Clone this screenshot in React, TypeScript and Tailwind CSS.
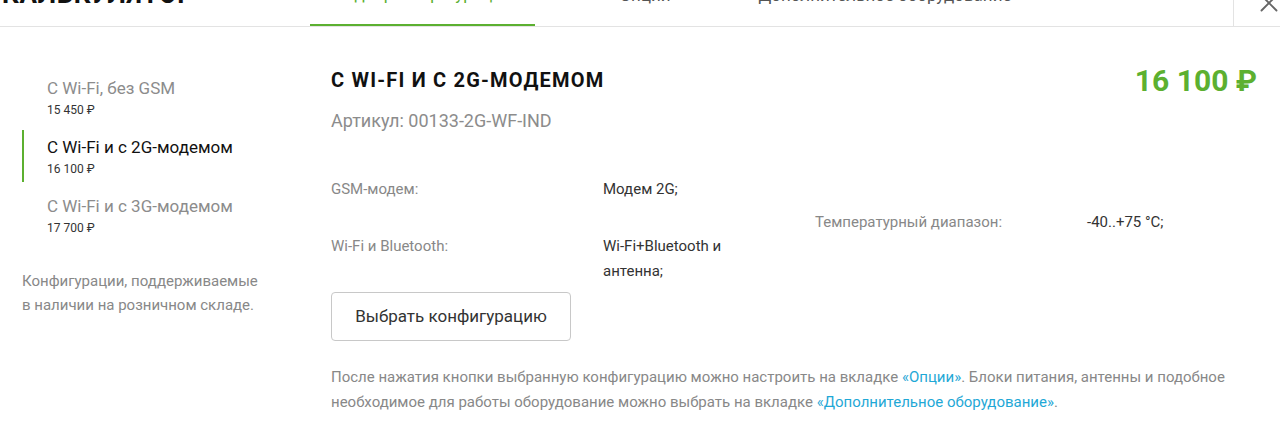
import { X } from 'lucide-react';

const configs = [
  { name: 'С Wi-Fi, без GSM', price: '15 450 ₽', active: false },
  { name: 'С Wi-Fi и с 2G-модемом', price: '16 100 ₽', active: true },
  { name: 'С Wi-Fi и с 3G-модемом', price: '17 700 ₽', active: false },
];

export default function App() {
  return (
    <div className="w-[1280px] h-[440px] bg-white overflow-hidden font-['Roboto',sans-serif]">
      {/* Header, cut off at the top */}
      <div className="h-[27px] border-b border-[#e3e3e3] flex overflow-hidden">
        <div className="flex-1 flex -mt-[38px] h-[65px]">
          <div className="w-[310px] pl-[2px] flex items-center text-[26px] font-bold tracking-wide text-[#111] whitespace-nowrap">
            КАЛЬКУЛЯТОР
          </div>
          <div className="w-[225px] flex items-center justify-center text-[17px] text-[#5cb030] border-b-[3px] border-[#5cb030] pt-[3px] whitespace-nowrap">
            Подбор конфигурации
          </div>
          <div className="w-[220px] flex items-center justify-center text-[17px] text-[#555] pt-[3px] whitespace-nowrap">
            Опции
          </div>
          <div className="w-[260px] flex items-center justify-center text-[17px] text-[#555] pt-[3px] whitespace-nowrap">
            Дополнительное оборудование
          </div>
        </div>
        <div className="w-[47px] border-l border-[#e3e3e3] relative">
          <X className="absolute left-[20px] -top-[12px] text-[#666]" size={30} strokeWidth={1.5} />
        </div>
      </div>

      <div className="flex">
        {/* Sidebar */}
        <div className="w-[331px] pl-[22px] pt-[44px]">
          <div className="flex flex-col gap-[7px]">
            {configs.map((c) => (
              <div
                key={c.name}
                className={`pl-[23px] pt-[5px] pb-[3px] border-l-2 ${c.active ? 'border-[#5cb030]' : 'border-transparent'}`}
              >
                <div className={`text-[17px] leading-[24px] ${c.active ? 'text-[#111]' : 'text-[#8c8c8c]'}`}>{c.name}</div>
                <div className="text-[12px] leading-[20px] text-[#333]">{c.price}</div>
              </div>
            ))}
          </div>
          <p className="mt-[28px] text-[15px] leading-[24px] text-[#888]">
            Конфигурации, поддерживаемые
            <br />
            в наличии на розничном складе.
          </p>
        </div>

        {/* Main */}
        <div className="flex-1 pr-[23px] pt-[38px]">
          <div className="flex justify-between items-start">
            <div>
              <h1 className="text-[20px] leading-[30px] font-bold tracking-[0.06em] text-[#111]">С WI-FI И С 2G-МОДЕМОМ</h1>
              <div className="mt-[14px] text-[18px] leading-[24px] text-[#8c8c8c]">Артикул: 00133-2G-WF-IND</div>
            </div>
            <div className="text-[30px] leading-[36px] font-bold text-[#5cb030] -mt-[2px]">16 100 ₽</div>
          </div>

          <div className="mt-[44px] flex">
            <div className="w-[484px] flex flex-col gap-[32px]">
              <div className="flex text-[15px] leading-[25px]">
                <div className="w-[272px] text-[#888]">GSM-модем:</div>
                <div className="text-[#333]">Модем 2G;</div>
              </div>
              <div className="flex text-[15px] leading-[25px]">
                <div className="w-[272px] text-[#888]">Wi-Fi и Bluetooth:</div>
                <div className="w-[140px] text-[#333]">Wi-Fi+Bluetooth и антенна;</div>
              </div>
            </div>
            <div className="flex text-[15px] leading-[25px] pt-[33px]">
              <div className="w-[272px] text-[#888]">Температурный диапазон:</div>
              <div className="text-[#333]">-40..+75 °C;</div>
            </div>
          </div>

          <button className="mt-[8px] w-[240px] h-[49px] border border-[#c8c8c8] rounded-[4px] text-[17px] text-[#333] bg-white">
            Выбрать конфигурацию
          </button>

          <p className="mt-[24px] text-[15px] leading-[25px] text-[#888]">
            После нажатия кнопки выбранную конфигурацию можно настроить на вкладке <span className="text-[#1fa8d6]"> «Опции»</span>. Блоки питания, антенны и подобное
            <br />
            необходимое для работы оборудование можно выбрать на вкладке <span className="text-[#1fa8d6]">«Дополнительное оборудование»</span>.
          </p>
        </div>
      </div>
    </div>
  );
}
